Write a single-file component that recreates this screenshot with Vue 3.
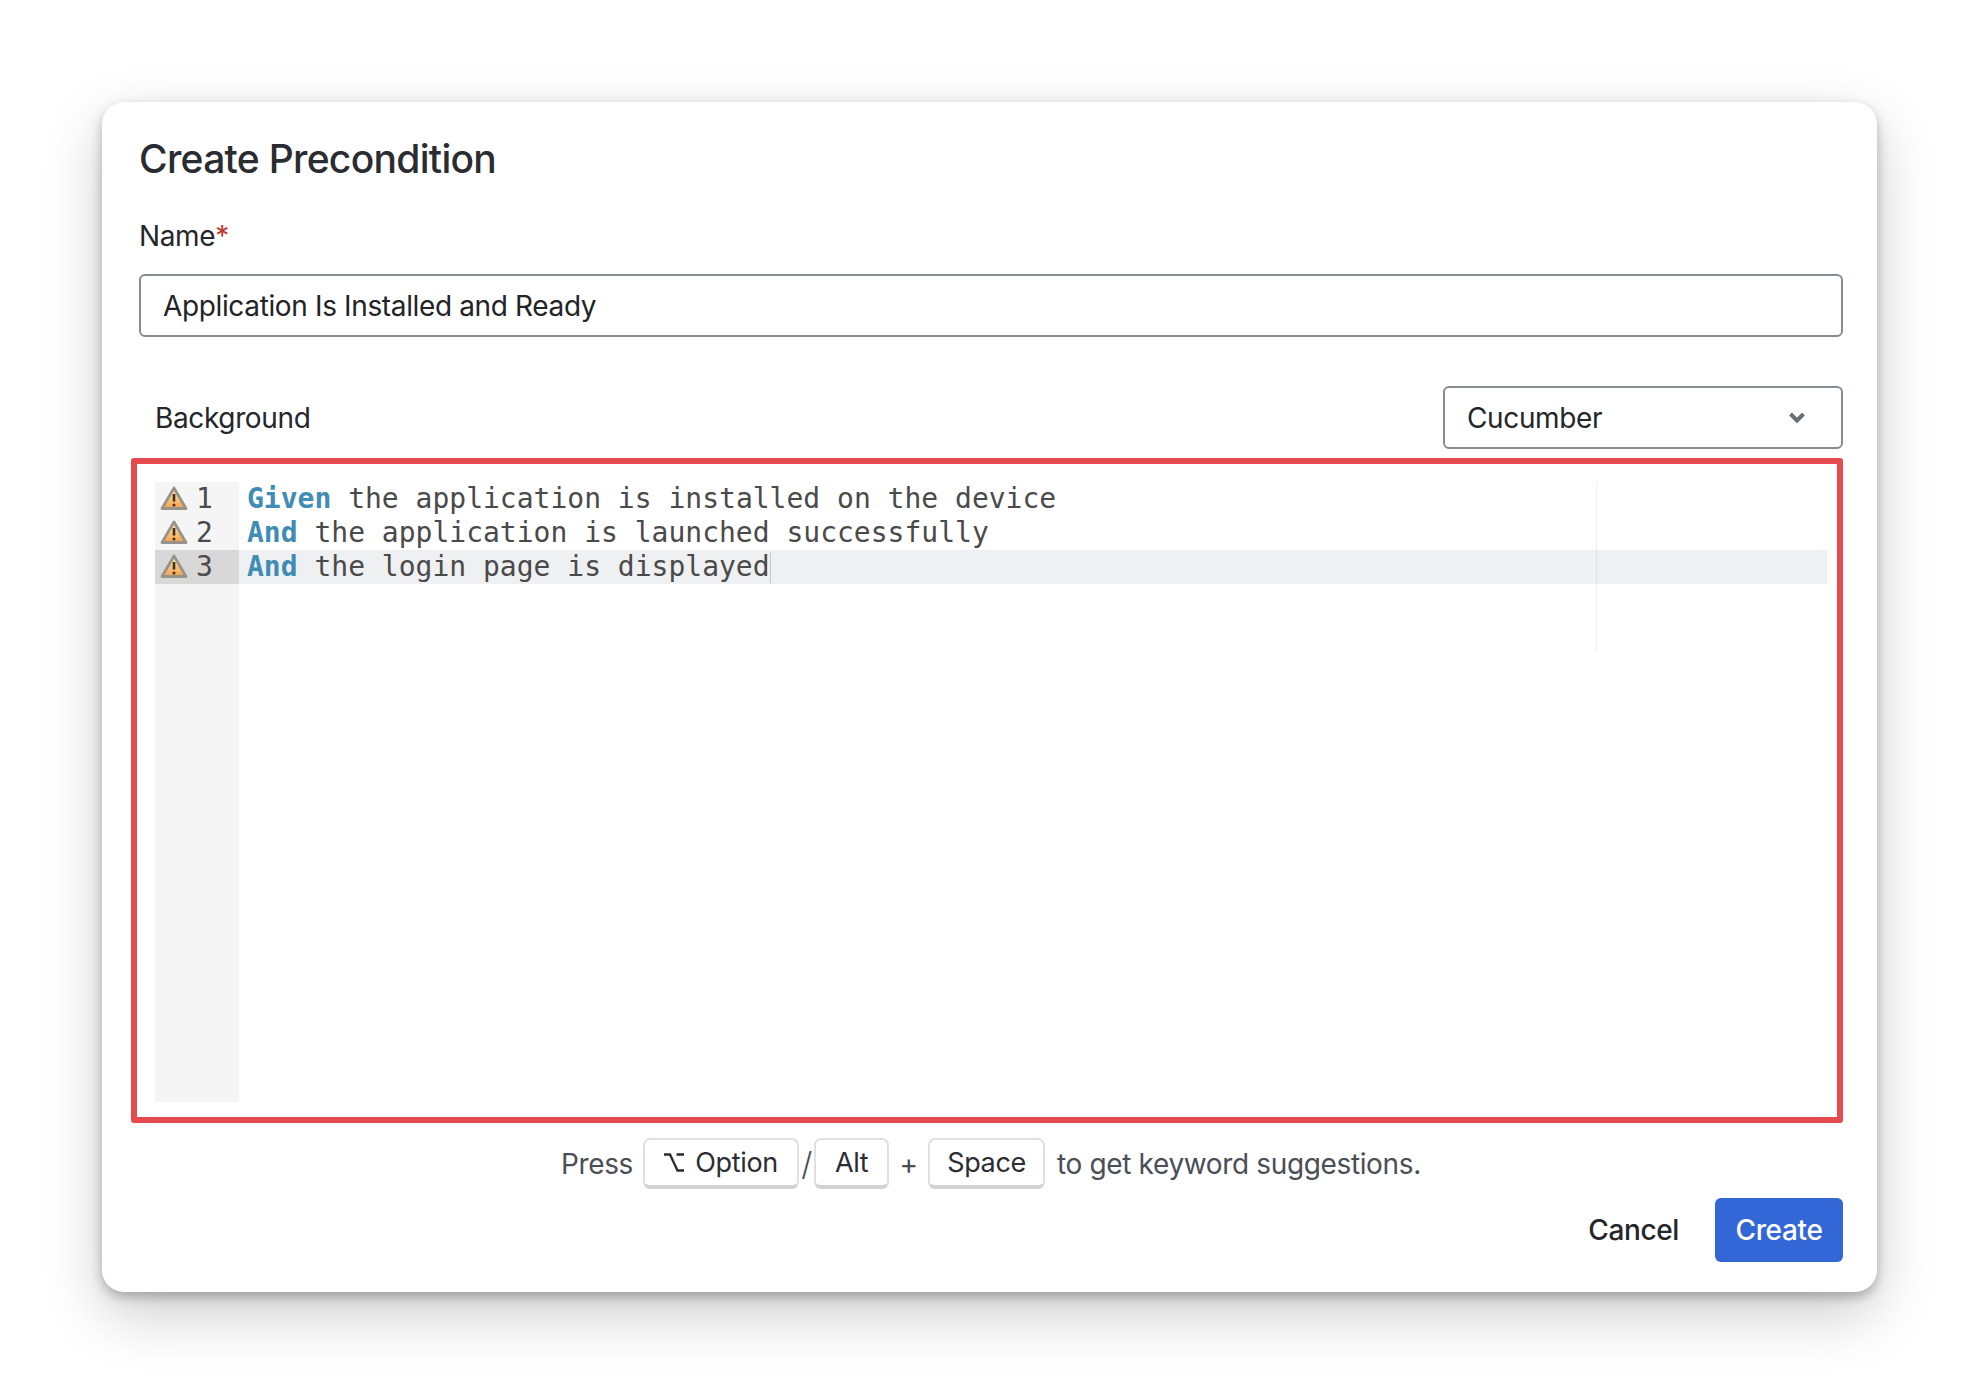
<script setup>
const lines = [
  { kw: 'Given', rest: ' the application is installed on the device' },
  { kw: 'And', rest: ' the application is launched successfully' },
  { kw: 'And', rest: ' the login page is displayed' }
]
</script>

<template>
  <div class="page">
    <section class="card">
      <h1 class="title">Create Precondition</h1>
      <label class="name-label">Name<span class="req">*</span></label>
      <div class="input">Application Is Installed and Ready</div>
      <div class="bg-row">
        <span class="bg-label">Background</span>
        <div class="select">
          <span>Cucumber</span>
          <svg class="chev" width="16" height="11" viewBox="0 0 16 11"><path d="M1.500 2 8 8.500 14.500 2" fill="none" stroke="#6b6e76" stroke-width="4"/></svg>
        </div>
      </div>
      <div class="highlight">
        <div class="editor">
          <div class="gutter">
            <div v-for="(l, i) in lines" :key="i" class="gline" :class="{ active: i === 2 }">
              <svg class="warn" width="28" height="26" viewBox="0 0 28 26">
                <defs>
                  <linearGradient id="wg" x1="0" y1="0" x2="0" y2="1">
                    <stop offset="0" stop-color="#fcecb8" />
                    <stop offset="1" stop-color="#f4a04a" />
                  </linearGradient>
                </defs>
                <path d="M14 2 26 22.500H2Z" fill="url(#wg)" stroke="#98938a" stroke-width="2.800" stroke-linejoin="round" />
                <path d="M14 8v7.500" stroke="#3f3220" stroke-width="2.600" />
                <circle cx="14" cy="19" r="1.500" fill="#3f3220" />
              </svg>
              <span class="num">{{ i + 1 }}</span>
            </div>
          </div>
          <div class="code">
            <div class="ruler"></div>
            <div v-for="(l, i) in lines" :key="i" class="cline" :class="{ active: i === 2 }"><span class="kw">{{ l.kw }}</span>{{ l.rest }}<span v-if="i === 2" class="caret"></span></div>
          </div>
        </div>
      </div>
      <div class="hint">
        <span>Press</span>
        <kbd class="key k-opt">
          <svg class="opt" width="20" height="19" viewBox="0 0 20 19"><path d="M0 1.500H6L13.500 17.500H20M12.500 1.500H20" fill="none" stroke="#2b2d33" stroke-width="2.300"/></svg>
          <span>Option</span>
        </kbd>
        <span class="slash">/</span>
        <kbd class="key k-alt">Alt</kbd>
        <span class="plus">+</span>
        <kbd class="key k-space">Space</kbd>
        <span>to get keyword suggestions.</span>
      </div>
      <div class="actions">
        <button class="cancel">Cancel</button>
        <button class="create">Create</button>
      </div>
    </section>
  </div>
</template>

<style>
html, body { margin: 0; background: #fff; }
</style>

<style scoped>
.page {
  box-sizing: border-box;
  width: 1979px;
  height: 1394px;
  padding: 102px 0 0 102px;
  background: #fff;
  font-family: Inter, "Liberation Sans", sans-serif;
  color: #24262b;
  overflow: hidden;
}
.card {
  box-sizing: border-box;
  width: 1775px;
  height: 1190px;
  padding: 0 34px 0 37px;
  background: #fff;
  border-radius: 22px;
  box-shadow: 0 5px 12px rgba(0, 0, 0, 0.26), 0 22px 60px rgba(0, 0, 0, 0.2);
  display: flex;
  flex-direction: column;
  font-size: 28px;
  letter-spacing: -0.36px;
}
.title {
  margin: 31px 0 0;
  font-size: 39px;
  line-height: 52px;
  font-weight: 500;
  letter-spacing: -0.7px;
  color: #2a2c31;
}
.name-label {
  margin-top: 33px;
  line-height: 36px;
}
.req { color: #c0392b; }
.input {
  box-sizing: border-box;
  margin-top: 20px;
  height: 63px;
  border: 2px solid #878b92;
  border-radius: 6px;
  padding-left: 22px;
  line-height: 61px;
  color: #212328;
}
.bg-row {
  margin-top: 49px;
  height: 63px;
  display: flex;
  align-items: center;
  justify-content: space-between;
  padding-left: 16px;
  line-height: 66px;
}
.select {
  box-sizing: border-box;
  width: 400px;
  height: 63px;
  border: 2px solid #878b92;
  border-radius: 6px;
  padding: 0 36px 0 22px;
  display: flex;
  align-items: center;
  justify-content: space-between;
}
.highlight {
  box-sizing: border-box;
  margin: 9px 0 0 -8px;
  width: 1712px;
  height: 665px;
  border: 6px solid #e64a4f;
  border-radius: 3px;
  padding: 18px 10px 15px 18px;
}
.editor {
  height: 100%;
  display: flex;
  font-family: "DejaVu Sans Mono", monospace;
  font-size: 28px;
  line-height: 34px;
  letter-spacing: 0;
  color: #4a4a4a;
}
.gutter {
  width: 84px;
  flex: none;
  background: #f5f5f5;
}
.gline {
  height: 34px;
  display: flex;
  align-items: center;
  padding-left: 5px;
  gap: 8px;
}
.gline.active { background: #d8d8d8; }
.warn { flex: none; }
.code {
  position: relative;
  flex: 1;
  white-space: pre;
}
.ruler {
  position: absolute;
  left: 1357px;
  top: 0;
  width: 1px;
  height: 170px;
  background: rgba(0, 0, 0, 0.06);
}
.cline {
  height: 34px;
  padding-left: 8px;
}
.cline.active { background: #eff0f2; }
.kw { color: #3f8cb5; font-weight: 700; }
.caret {
  display: inline-block;
  width: 1px;
  height: 30px;
  vertical-align: middle;
  background: #c8c8c8;
}
.hint {
  height: 51px;
  margin-top: 15px;
  display: flex;
  align-items: center;
  color: #4b4e56;
  padding-left: 422px;
}
.key {
  box-sizing: border-box;
  height: 51px;
  border: 2px solid #e0e0e0;
  border-bottom: 4px solid #d2d2d2;
  border-radius: 7px;
  display: flex;
  align-items: center;
  justify-content: center;
  font-family: Inter, sans-serif;
  font-size: 27px;
  color: #2b2d33;
  background: #fff;
}
.k-opt { width: 156px; margin-left: 10px; gap: 11px; }
.slash { width: 15px; text-align: center; font-size: 32px; font-weight: 300; }
.k-alt { width: 75px; }
.plus { width: 39px; text-align: center; }
.k-space { width: 117px; margin-right: 12px; }
.actions {
  margin-top: 9px;
  display: flex;
  justify-content: flex-end;
  align-items: center;
}
button {
  font-family: Inter, sans-serif;
  font-size: 28px;
  letter-spacing: -0.36px;
  font-weight: 500;
  border: 0;
  padding: 0;
}
.cancel {
  background: none;
  color: #24262b;
  margin-right: 36px;
}
.create {
  width: 128px;
  height: 64px;
  border-radius: 6px;
  background: #3366d6;
  color: #fff;
}
</style>
